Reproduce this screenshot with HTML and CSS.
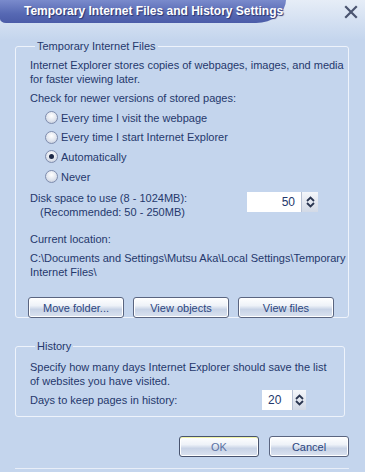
FILE: index.html
```html
<!DOCTYPE html>
<html lang="en">
<head>
<meta charset="UTF-8">
<title>Temporary Internet Files and History Settings</title>
<link rel="stylesheet" href="styles.css">
</head>
<body>
<div class="dialog">
    <div class="titlebar">
        <div class="title-tab">Temporary Internet Files and History Settings</div>
        <div class="close">
            <svg width="14" height="14" viewBox="0 0 14 14"><path d="M2 2 L12 12 M12 2 L2 12" stroke="#4a5470" stroke-width="2.2" stroke-linecap="square"/></svg>
        </div>
    </div>
    <div class="dialog-body">
        <fieldset class="group group-files">
            <legend>Temporary Internet Files</legend>
            <p class="desc">Internet Explorer stores copies of webpages, images, and media<br>for faster viewing later.</p>
            <p class="label">Check for newer versions of stored pages:</p>
            <div class="radios">
                <label class="radio"><span class="dot"></span>Every time I visit the webpage</label>
                <label class="radio"><span class="dot"></span>Every time I start Internet Explorer</label>
                <label class="radio"><span class="dot checked"></span>Automatically</label>
                <label class="radio"><span class="dot"></span>Never</label>
            </div>
            <div class="disk-row">
                <div class="disk-text">
                    <div>Disk space to use (8 - 1024MB):</div>
                    <div class="indent">(Recommended: 50 - 250MB)</div>
                </div>
                <div class="spin spin-wide">
                    <div class="spin-value">50</div>
                    <div class="spin-arrows">
                        <svg width="9" height="12" viewBox="0 0 9 12"><path d="M1 5 L4.5 1.5 L8 5 M1 7 L4.5 10.5 L8 7" fill="none" stroke="#2a3550" stroke-width="1.8"/></svg>
                    </div>
                </div>
            </div>
            <p class="label loc-label">Current location:</p>
            <p class="desc">C:\Documents and Settings\Mutsu Aka\Local Settings\Temporary<br>Internet Files\</p>
            <div class="button-row">
                <button class="btn">Move folder...</button>
                <button class="btn">View objects</button>
                <button class="btn">View files</button>
            </div>
        </fieldset>
        <fieldset class="group group-history">
            <legend>History</legend>
            <p class="desc">Specify how many days Internet Explorer should save the list<br>of websites you have visited.</p>
            <div class="days-row">
                <span>Days to keep pages in history:</span>
                <div class="spin spin-narrow">
                    <div class="spin-value">20</div>
                    <div class="spin-arrows">
                        <svg width="9" height="12" viewBox="0 0 9 12"><path d="M1 5 L4.5 1.5 L8 5 M1 7 L4.5 10.5 L8 7" fill="none" stroke="#2a3550" stroke-width="1.8"/></svg>
                    </div>
                </div>
            </div>
        </fieldset>
        <div class="footer">
            <button class="btn btn-ok">OK</button>
            <button class="btn btn-cancel">Cancel</button>
        </div>
    </div>
</div>
</body>
</html>
```

FILE: styles.css
```css
body {
    margin: 0;
    font-family: "Liberation Sans", Arial, sans-serif;
    font-size: 11px;
    color: #24386c;
    background-color: #c4d5ed;
}
.dialog {
    width: 365px;
    height: 472px;
    background-color: #c4d5ed;
    overflow: hidden;
}
.titlebar {
    display: flex;
    align-items: flex-start;
    height: 40px;
    background: linear-gradient(#e6edf7, #c4d5ed);
}
.title-tab {
    width: 262px;
    height: 23px;
    padding-left: 24px;
    line-height: 22px;
    white-space: nowrap;
    font-weight: bold;
    font-size: 12px;
    color: #ffffff;
    text-shadow: 1px 1px 1px #2a3570;
    background: linear-gradient(#7a8bcc, #5668b3 60%, #4b5ca8);
    border-bottom-right-radius: 30px 23px;
    border-bottom-left-radius: 6px 4px;
}
.close {
    margin-left: auto;
    margin-right: 7px;
    margin-top: 5px;
}
.dialog-body {
    padding: 0 16px 0 15px;
}
.group {
    margin: 0;
    padding: 0 0 0 14px;
    border: 1px solid #eef3fb;
    border-radius: 3px;
    min-width: 0;
}
.group legend {
    padding: 0 2px;
    margin-left: 5px;
    line-height: 14px;
}
.group-files {
    height: 277px;
    margin-top: -1px;
}
.group-history {
    width: 314px;
    margin-top: 21px;
    height: 76px;
}
.desc, .label {
    margin: 0;
    line-height: 14px;
    white-space: nowrap;
}
.group-files .desc {
    margin-top: 5px;
}
.label {
    margin-top: 5px;
}
.radios {
    display: flex;
    flex-direction: column;
    gap: 4.7px;
    margin-top: 5px;
    padding-left: 15px;
}
.radio {
    display: flex;
    align-items: center;
    height: 15px;
}
.dot {
    box-sizing: border-box;
    width: 13px;
    height: 13px;
    margin-right: 3px;
    border: 1px solid #7f8dae;
    border-radius: 50%;
    background: radial-gradient(circle at 50% 35%, #ffffff, #dde2ec 60%, #b4bed2);
    display: flex;
    align-items: center;
    justify-content: center;
}
.dot.checked::after {
    content: "";
    width: 5px;
    height: 5px;
    border-radius: 50%;
    background-color: #1d2a48;
}
.disk-row {
    display: flex;
    align-items: flex-start;
    margin-top: 7px;
}
.disk-text {
    line-height: 14px;
}
.indent {
    padding-left: 10px;
}
.spin {
    display: flex;
    height: 20px;
}
.spin-wide {
    margin-left: auto;
    margin-right: 30px;
    margin-top: 1px;
}
.spin-value {
    width: 48px;
    padding-right: 6px;
    background-color: #ffffff;
    text-align: right;
    line-height: 20px;
    font-size: 12px;
}
.spin-narrow .spin-value {
    width: 24px;
    padding: 0 0 0 6px;
    text-align: left;
}
.spin-arrows {
    width: 16px;
    display: flex;
    align-items: center;
    justify-content: center;
    background: linear-gradient(#f4f6fa, #d2d9e6);
    border-left: 1px solid #b7c1d4;
}
.spin-narrow .spin-arrows {
    width: 13px;
}
.loc-label {
    margin-top: 13px;
}
.loc-label + .desc {
    margin-top: 5px;
}
.button-row {
    display: flex;
    gap: 9px;
    margin-top: 18px;
    margin-left: -2px;
}
.btn {
    box-sizing: border-box;
    width: 96px;
    height: 21px;
    padding: 0;
    font-family: inherit;
    font-size: 11px;
    color: #2c4680;
    border: 1px solid #5a6580;
    border-radius: 3px;
    background: linear-gradient(#ffffff, #eef2f8 40%, #c8d3e6 60%, #dbe3f0);
    box-shadow: inset 0 0 0 1px #ffffff;
}
.group-history .desc {
    margin-top: 7px;
}
.days-row {
    display: flex;
    align-items: center;
    justify-content: space-between;
    margin-top: 2px;
    padding-right: 38px;
}
.footer {
    display: flex;
    justify-content: flex-end;
    gap: 10px;
    margin-top: 19px;
    padding-bottom: 11px;
    border-bottom: 1px solid #e8eef8;
}
.btn-ok {
    width: 80px;
    color: #5c72a4;
    border-color: #48536e;
    box-shadow: inset 0 1px 0 #f0f4a8, inset 0 0 0 1px #ffffff;
}
.btn-cancel {
    width: 80px;
}
```
